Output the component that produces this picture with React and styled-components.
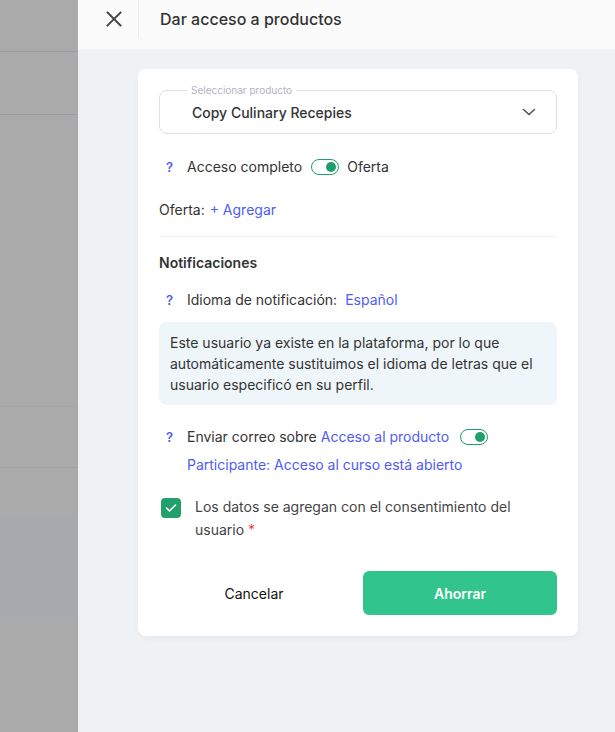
import React from "react";
import styled, { createGlobalStyle } from "styled-components";

const Global = createGlobalStyle`
  html, body { margin: 0; padding: 0; }
  body { font-family: Inter, "Noto Sans", sans-serif; color: #333; background: #fff; }
  * { box-sizing: border-box; }
`;

const Screen = styled.div`
  display: flex;
  width: 615px;
  height: 732px;
  overflow: hidden;
`;

const Backdrop = styled.div`
  width: 78px;
  flex: none;
  display: flex;
  flex-direction: column;
  background: #aaaaab;
`;

const GhostRow = styled.div`
  height: ${(p) => p.$h}px;
  flex: none;
  background: ${(p) => p.$bg || "#aaaaab"};
  border-bottom: ${(p) => (p.$line ? `1px solid ${p.$line}` : "none")};
`;

const Drawer = styled.div`
  flex: 1;
  display: flex;
  flex-direction: column;
  background: #eef2f4;
`;

const Header = styled.div`
  height: 49px;
  display: flex;
  align-items: flex-start;
  background: #fbfbfb;
`;

const CloseBtn = styled.button`
  width: 61px;
  height: 38px;
  border: none;
  border-right: 1px solid #ececec;
  background: transparent;
  display: flex;
  align-items: center;
  justify-content: center;
  padding: 0 0 0 12px;
  cursor: pointer;
`;

const Title = styled.h1`
  margin: 0;
  padding-left: 21px;
  height: 38px;
  display: flex;
  align-items: center;
  font-size: 16px;
  font-weight: 500;
  color: #333;
`;

const Body = styled.div`
  padding: 20px 37px 0 60px;
`;

const Card = styled.div`
  background: #fff;
  border-radius: 8px;
  padding: 21px;
  box-shadow: 0 2px 6px rgba(0, 0, 0, 0.04);
  display: flex;
  flex-direction: column;
`;

const SelectBox = styled.div`
  position: relative;
  height: 44px;
  border: 1px solid #dedeec;
  border-radius: 8px;
  display: flex;
  align-items: center;
  justify-content: space-between;
  padding: 0 20px 0 32px;
`;

const SelectLabel = styled.span`
  position: absolute;
  top: -7px;
  left: 27px;
  padding: 0 4px;
  background: #fff;
  font-size: 10px;
  line-height: 12px;
  color: #b3b3c4;
`;

const SelectValue = styled.span`
  font-size: 14px;
  font-weight: 500;
  color: #333;
`;

const Row = styled.div`
  display: flex;
  align-items: center;
  height: 20px;
  margin-top: ${(p) => p.$mt || 0}px;
  padding-left: ${(p) => p.$pl || 0}px;
  font-size: 14px;
  line-height: 20px;
  color: #333;
  white-space: nowrap;
`;

const QMark = styled.span`
  width: 28px;
  padding-left: 7px;
  flex: none;
  color: #4a5cf2;
  font-size: 13px;
  font-weight: 600;
`;

const Link = styled.span`
  color: #4f5cf6;
  margin-left: ${(p) => p.$ml || 0}px;
`;

const Toggle = styled.span`
  width: 28px;
  height: 16px;
  border: 1.5px solid #1f9e6e;
  border-radius: 8px;
  display: inline-flex;
  align-items: center;
  justify-content: flex-end;
  padding-right: 2px;
  margin: 0 ${(p) => p.$mr || 0}px 0 ${(p) => p.$ml || 0}px;
  flex: none;
  &::after {
    content: "";
    width: 10px;
    height: 10px;
    border-radius: 50%;
    background: #1f9e6e;
  }
`;

const Divider = styled.hr`
  border: none;
  border-top: 1px solid #f1f1f3;
  margin: 16px 0 0;
`;

const SectionTitle = styled.h2`
  margin: 16px 0 0;
  font-size: 14px;
  line-height: 20px;
  font-weight: 600;
  color: #333;
`;

const InfoBox = styled.div`
  margin-top: 12px;
  background: #eff6fa;
  border-radius: 8px;
  padding: 10px 11px;
  font-size: 14px;
  line-height: 21px;
  color: #333;
`;

const Consent = styled.label`
  display: flex;
  align-items: flex-start;
  margin-top: 20px;
  font-size: 14px;
  line-height: 23px;
  color: #444;
`;

const CheckBox = styled.span`
  width: 20px;
  height: 20px;
  margin: 3px 14px 0 2px;
  border-radius: 4px;
  background: #22a06c;
  flex: none;
  display: flex;
  align-items: center;
  justify-content: center;
`;

const ConsentText = styled.span`
  &::after {
    content: " *";
    color: #e5484d;
  }
`;

const Actions = styled.div`
  margin-top: 30px;
  display: grid;
  grid-template-columns: 190px 1fr;
  gap: 14px;
`;

const Button = styled.button`
  height: 44px;
  border: none;
  border-radius: 6px;
  font-family: inherit;
  font-size: 14px;
  font-weight: ${(p) => (p.$primary ? 600 : 400)};
  color: ${(p) => (p.$primary ? "#fff" : "#111")};
  background: ${(p) => (p.$primary ? "#32c48d" : "transparent")};
  cursor: pointer;
`;

export default function App() {
  return (
    <>
      <Global />
      <Screen>
        <Backdrop>
          <GhostRow $h={52} $line="#9c9ba8" />
          <GhostRow $h={63} $line="#9c9ba8" />
          <GhostRow $h={292} $line="#a6a6a7" />
          <GhostRow $h={61} $line="#a2a2a3" />
          <GhostRow $h={50} />
          <GhostRow $h={99} $bg="#a8a9ae" />
          <GhostRow $h={110} />
        </Backdrop>
        <Drawer>
          <Header>
            <CloseBtn aria-label="Cerrar">
              <svg width="18" height="18" viewBox="0 0 18 18">
                <path d="M2.5 2.5 L15.5 15.5 M15.5 2.5 L2.5 15.5" stroke="#444" strokeWidth="1.9" strokeLinecap="square" />
              </svg>
            </CloseBtn>
            <Title>Dar acceso a productos</Title>
          </Header>
          <Body>
            <Card>
              <SelectBox>
                <SelectLabel>Seleccionar producto</SelectLabel>
                <SelectValue>Copy Culinary Recepies</SelectValue>
                <svg width="14" height="8" viewBox="0 0 14 8">
                  <path d="M1.5 1.5 L7 6.5 L12.5 1.5" fill="none" stroke="#555" strokeWidth="1.6" strokeLinecap="round" strokeLinejoin="round" />
                </svg>
              </SelectBox>

              <Row $mt={23}>
                <QMark>?</QMark>
                Acceso completo
                <Toggle $ml={9} $mr={8} />
                Oferta
              </Row>

              <Row $mt={23}>
                Oferta:
                <Link $ml={5}>+ Agregar</Link>
              </Row>

              <Divider />

              <SectionTitle>Notificaciones</SectionTitle>

              <Row $mt={17}>
                <QMark>?</QMark>
                Idioma de notificación:
                <Link $ml={8}>Español</Link>
              </Row>

              <InfoBox>
                Este usuario ya existe en la plataforma, por lo que automáticamente sustituimos el idioma de letras que el usuario especificó en su perfil.
              </InfoBox>

              <Row $mt={22}>
                <QMark>?</QMark>
                Enviar correo sobre
                <Link $ml={4}>Acceso al producto</Link>
                <Toggle $ml={11} />
              </Row>

              <Row $mt={8} $pl={28}>
                <Link>Participante: Acceso al curso está abierto</Link>
              </Row>

              <Consent>
                <CheckBox>
                  <svg width="12" height="10" viewBox="0 0 12 10">
                    <path d="M1.5 5 L4.5 8 L10.5 2" fill="none" stroke="#fff" strokeWidth="1.6" strokeLinecap="round" strokeLinejoin="round" />
                  </svg>
                </CheckBox>
                <ConsentText>Los datos se agregan con el consentimiento del usuario</ConsentText>
              </Consent>

              <Actions>
                <Button>Cancelar</Button>
                <Button $primary>Ahorrar</Button>
              </Actions>
            </Card>
          </Body>
        </Drawer>
      </Screen>
    </>
  );
}
